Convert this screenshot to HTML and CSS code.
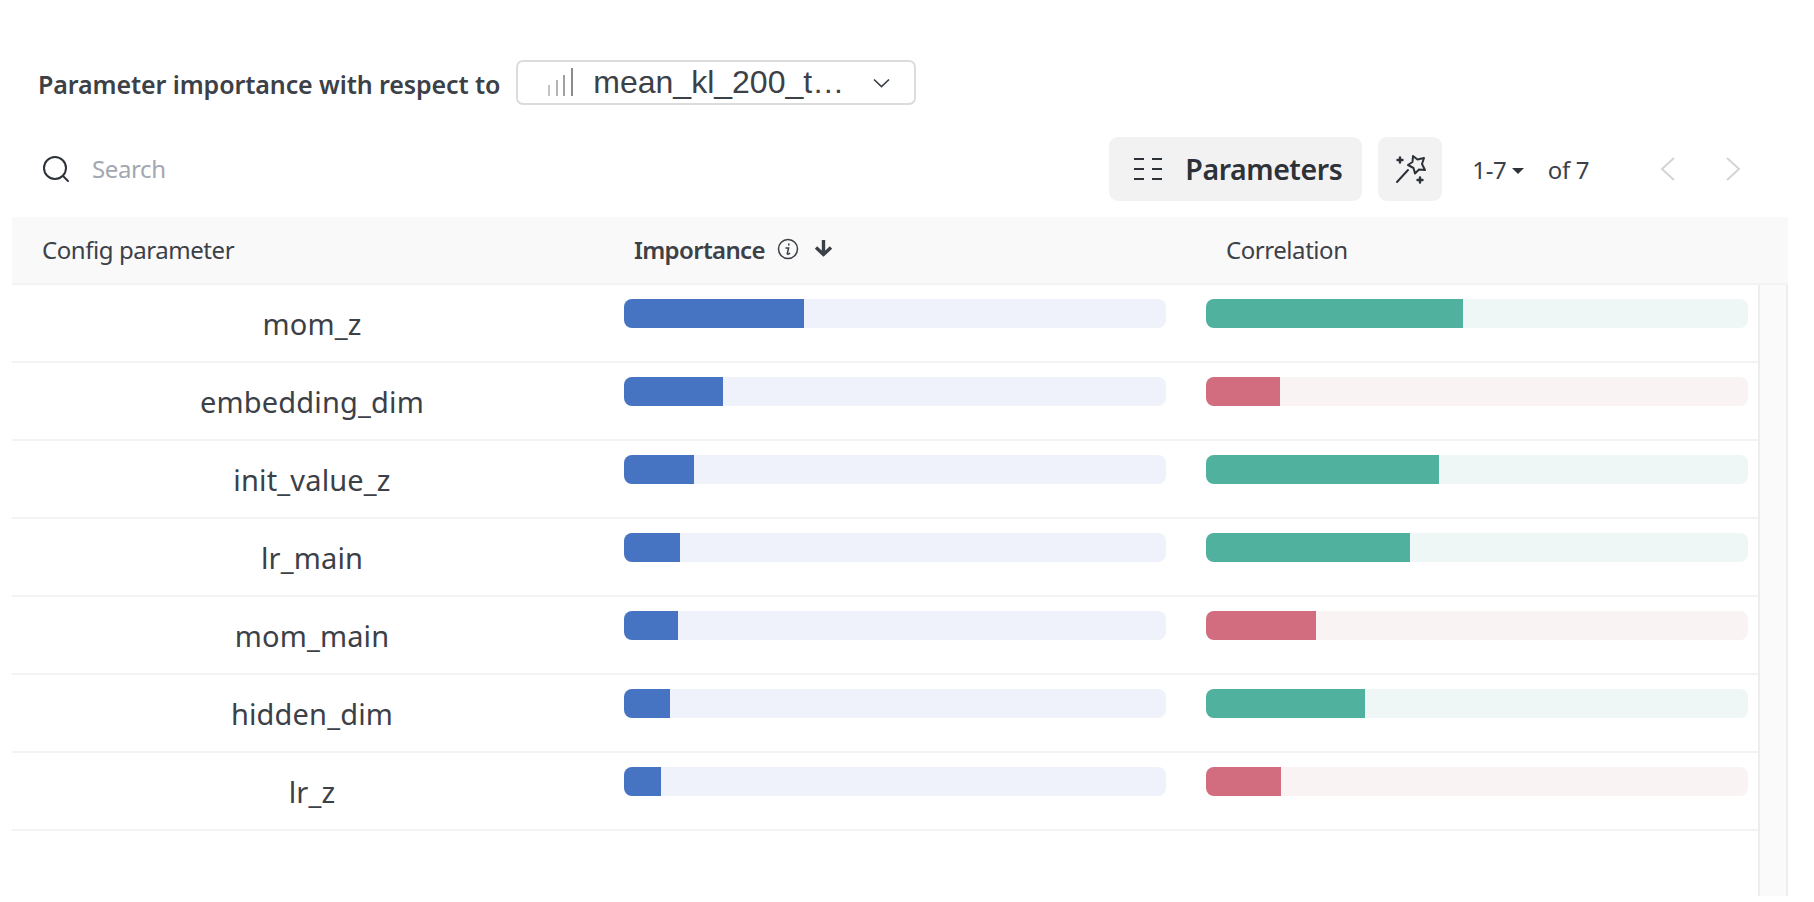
FILE: index.html
```html
<!DOCTYPE html>
<html lang="en">
<head>
<meta charset="utf-8">
<title>Parameter importance</title>
<link rel="stylesheet" href="styles.css">
</head>
<body>
<main class="panel">
  <div class="title-row">
    <span class="title">Parameter importance with respect to</span>
    <div class="select">
      <svg class="bars-icon" width="28" height="30" viewBox="0 0 28 30" fill="none" stroke-width="2"><path d="M2 18V29" stroke="#c4c4c4"/><path d="M10 13V29" stroke="#b4b4b4"/><path d="M17 8V29" stroke="#a0a0a0"/><path d="M25 1V29" stroke="#8c8c8c"/></svg>
      <span class="select-text">mean_kl_200_t…</span>
      <svg class="select-chevron" width="17" height="10" viewBox="0 0 17 10" fill="none" stroke="#3c4047" stroke-width="1.7"><path d="M1 1.5L8.5 8.5L16 1.5"/></svg>
    </div>
  </div>
  <div class="toolbar">
    <svg class="search-icon" width="28" height="28" viewBox="0 0 28 28" fill="none" stroke="#2d3138" stroke-width="2"><circle cx="13" cy="13" r="11"/><path d="M21 21L26 26" stroke-linecap="round"/></svg>
    <span class="search-text">Search</span>
    <div class="spacer"></div>
    <div class="btn btn-params">
      <svg width="28" height="22" viewBox="0 0 28 22" fill="none" stroke="#2d3138" stroke-width="2"><path d="M0 1H10M18 1H28M0 11H10M18 11H28M0 21H10M18 21H28"/></svg>
      <span>Parameters</span>
    </div>
    <div class="btn btn-wand">
      <svg width="32" height="32" viewBox="0 0 32 32" fill="none" stroke="#2d3138" stroke-width="2" stroke-linecap="round" stroke-linejoin="round"><path d="M3 29L14 17"/><path d="M19 3L23.5 6.5L30 5L28 11L31 17L25 16.5L21 20.5L19.5 15L14 12L18.5 9Z"/><path d="M6 4.5V9.5M3.5 7H8.5M26 24.5V29.5M23.5 27H28.5" stroke-width="2.4"/></svg>
    </div>
    <div class="pager">
      <span class="range">1-7</span>
      <span class="caret"></span>
      <span class="of">of 7</span>
      <svg class="nav nav-prev" width="16" height="24" viewBox="0 0 16 24" fill="none" stroke="#d2d4d7" stroke-width="2"><path d="M14 1L2 12L14 23"/></svg>
      <svg class="nav nav-next" width="16" height="24" viewBox="0 0 16 24" fill="none" stroke="#d2d4d7" stroke-width="2"><path d="M2 1L14 12L2 23"/></svg>
    </div>
  </div>
  <div class="table">
    <div class="head">
      <div class="head-cell head-config">Config parameter</div>
      <div class="head-cell head-imp"><strong>Importance</strong>
        <svg width="22" height="22" viewBox="0 0 22 22" fill="none" stroke="#3c4047" stroke-width="1.5"><circle cx="11" cy="11" r="9.5"/><path d="M9 10H11.6L10.3 15.5C10.2 16.3 11 16.5 12.6 15.4M11.8 6V6.9" stroke-linecap="round"/></svg>
        <svg class="arrow" width="19" height="17" viewBox="0 0 19 17" fill="none" stroke="#3c4047" stroke-width="3.4"><path d="M9.5 0V14M2 7.5L9.5 14.5L17 7.5"/></svg>
      </div>
      <div class="head-cell head-corr">Correlation</div>
    </div>
    <div class="body">
      <div class="rows">
        <div class="row"><div class="name">mom_z</div><div class="cell cell-imp"><div class="track track-blue"><div class="fill fill-blue" style="width:180px"></div></div></div><div class="cell cell-corr"><div class="track track-green"><div class="fill fill-green" style="width:257px"></div></div></div></div>
        <div class="row"><div class="name">embedding_dim</div><div class="cell cell-imp"><div class="track track-blue"><div class="fill fill-blue" style="width:99px"></div></div></div><div class="cell cell-corr"><div class="track track-red"><div class="fill fill-red" style="width:74px"></div></div></div></div>
        <div class="row"><div class="name">init_value_z</div><div class="cell cell-imp"><div class="track track-blue"><div class="fill fill-blue" style="width:70px"></div></div></div><div class="cell cell-corr"><div class="track track-green"><div class="fill fill-green" style="width:233px"></div></div></div></div>
        <div class="row"><div class="name">lr_main</div><div class="cell cell-imp"><div class="track track-blue"><div class="fill fill-blue" style="width:56px"></div></div></div><div class="cell cell-corr"><div class="track track-green"><div class="fill fill-green" style="width:204px"></div></div></div></div>
        <div class="row"><div class="name">mom_main</div><div class="cell cell-imp"><div class="track track-blue"><div class="fill fill-blue" style="width:54px"></div></div></div><div class="cell cell-corr"><div class="track track-red"><div class="fill fill-red" style="width:110px"></div></div></div></div>
        <div class="row"><div class="name">hidden_dim</div><div class="cell cell-imp"><div class="track track-blue"><div class="fill fill-blue" style="width:46px"></div></div></div><div class="cell cell-corr"><div class="track track-green"><div class="fill fill-green" style="width:159px"></div></div></div></div>
        <div class="row"><div class="name">lr_z</div><div class="cell cell-imp"><div class="track track-blue"><div class="fill fill-blue" style="width:37px"></div></div></div><div class="cell cell-corr"><div class="track track-red"><div class="fill fill-red" style="width:75px"></div></div></div></div>
      </div>
      <div class="scrollbar"></div>
    </div>
  </div>
</main>
</body>
</html>
```
FILE: styles.css
```css
* { box-sizing: border-box; }
html, body { margin: 0; height: 100%; background: #fff; overflow: hidden; }
body { font-family: "Noto Sans", sans-serif; color: #3c4047; }
.panel { width: 1776px; margin-left: 12px; padding-top: 60px; }
.title-row { display: flex; align-items: center; height: 45px; padding-left: 26px; gap: 16px; }
.title { font-size: 25px; font-weight: 600; letter-spacing: -0.1px; color: #3c4047; white-space: nowrap; padding-top: 2px; }
.select { width: 400px; height: 45px; border: 2px solid #dcdcdc; border-radius: 7px; display: flex; align-items: center; padding-left: 29px; }
.bars-icon { margin-top: -2px; }
.select-text { font-family: "Liberation Sans", Arial, sans-serif; font-size: 32px; color: #3c4047; margin-left: 18px; width: 280px; white-space: nowrap; }
.toolbar { display: flex; align-items: center; height: 64px; margin-top: 32px; padding-left: 30px; padding-right: 47px; }
.search-text { font-size: 24px; letter-spacing: -0.4px; color: #a3a7b0; margin-left: 22px; padding-bottom: 2px; }
.spacer { flex: 1; }
.btn { height: 64px; background: #f2f2f2; border-radius: 9px; display: flex; align-items: center; }
.btn-params { width: 253px; padding-left: 25px; gap: 23px; font-size: 28.5px; font-weight: 600; letter-spacing: -0.45px; color: #2d3138; }
.btn-wand { width: 64px; justify-content: center; margin-left: 16px; }
.pager { display: flex; align-items: center; margin-left: 30px; font-size: 24px; letter-spacing: -0.4px; color: #3c4047; }
.caret { width: 0; height: 0; border-left: 6px solid transparent; border-right: 6px solid transparent; border-top: 6px solid #2d3138; margin-left: 6px; margin-top: 3px; }
.of { margin-left: 23.5px; }
.nav-prev { margin-left: 71px; }
.nav-next { margin-left: 49px; }
.table { margin-top: 16px; }
.head { display: grid; grid-template-columns: 600px 582px 1fr; align-items: center; height: 68px; padding-bottom: 2px; background: #f9f9f9; border-bottom: 2px solid #f3f3f3; font-size: 24px; letter-spacing: -0.44px; color: #3c4047; }
.head-cell { display: flex; align-items: center; }
.head-config { padding-left: 30px; }
.head-imp { padding-left: 22px; }
.head-imp strong { font-weight: 600; letter-spacing: -0.65px; }
.head-imp svg { margin-left: 12px; }
.head-imp .arrow { margin-left: 15px; margin-top: -2px; }
.head-corr { padding-left: 32px; }
.body { display: flex; height: 611px; }
.rows { width: 1746px; flex: none; }
.row { display: grid; grid-template-columns: 600px 582px 1fr; height: 78px; border-bottom: 2px solid #f3f3f3; }
.name { font-size: 29px; letter-spacing: 0.15px; color: #3c4047; text-align: center; line-height: 32px; padding-top: 23px; }
.cell { padding-top: 14px; }
.cell-imp { padding-left: 12px; padding-right: 28px; }
.cell-corr { padding-left: 12px; padding-right: 10px; }
.track { height: 29px; border-radius: 8px; overflow: hidden; }
.fill { height: 100%; }
.track-blue { background: #eff2fa; }
.fill-blue { background: #4774c2; }
.track-green { background: #eef7f5; }
.fill-green { background: #50b19f; }
.track-red { background: #f9f3f4; }
.fill-red { background: #d16d7f; }
.scrollbar { width: 30px; flex: none; background: #fafafa; border-left: 2px solid #ededed; border-right: 2px solid #ededed; }
```
